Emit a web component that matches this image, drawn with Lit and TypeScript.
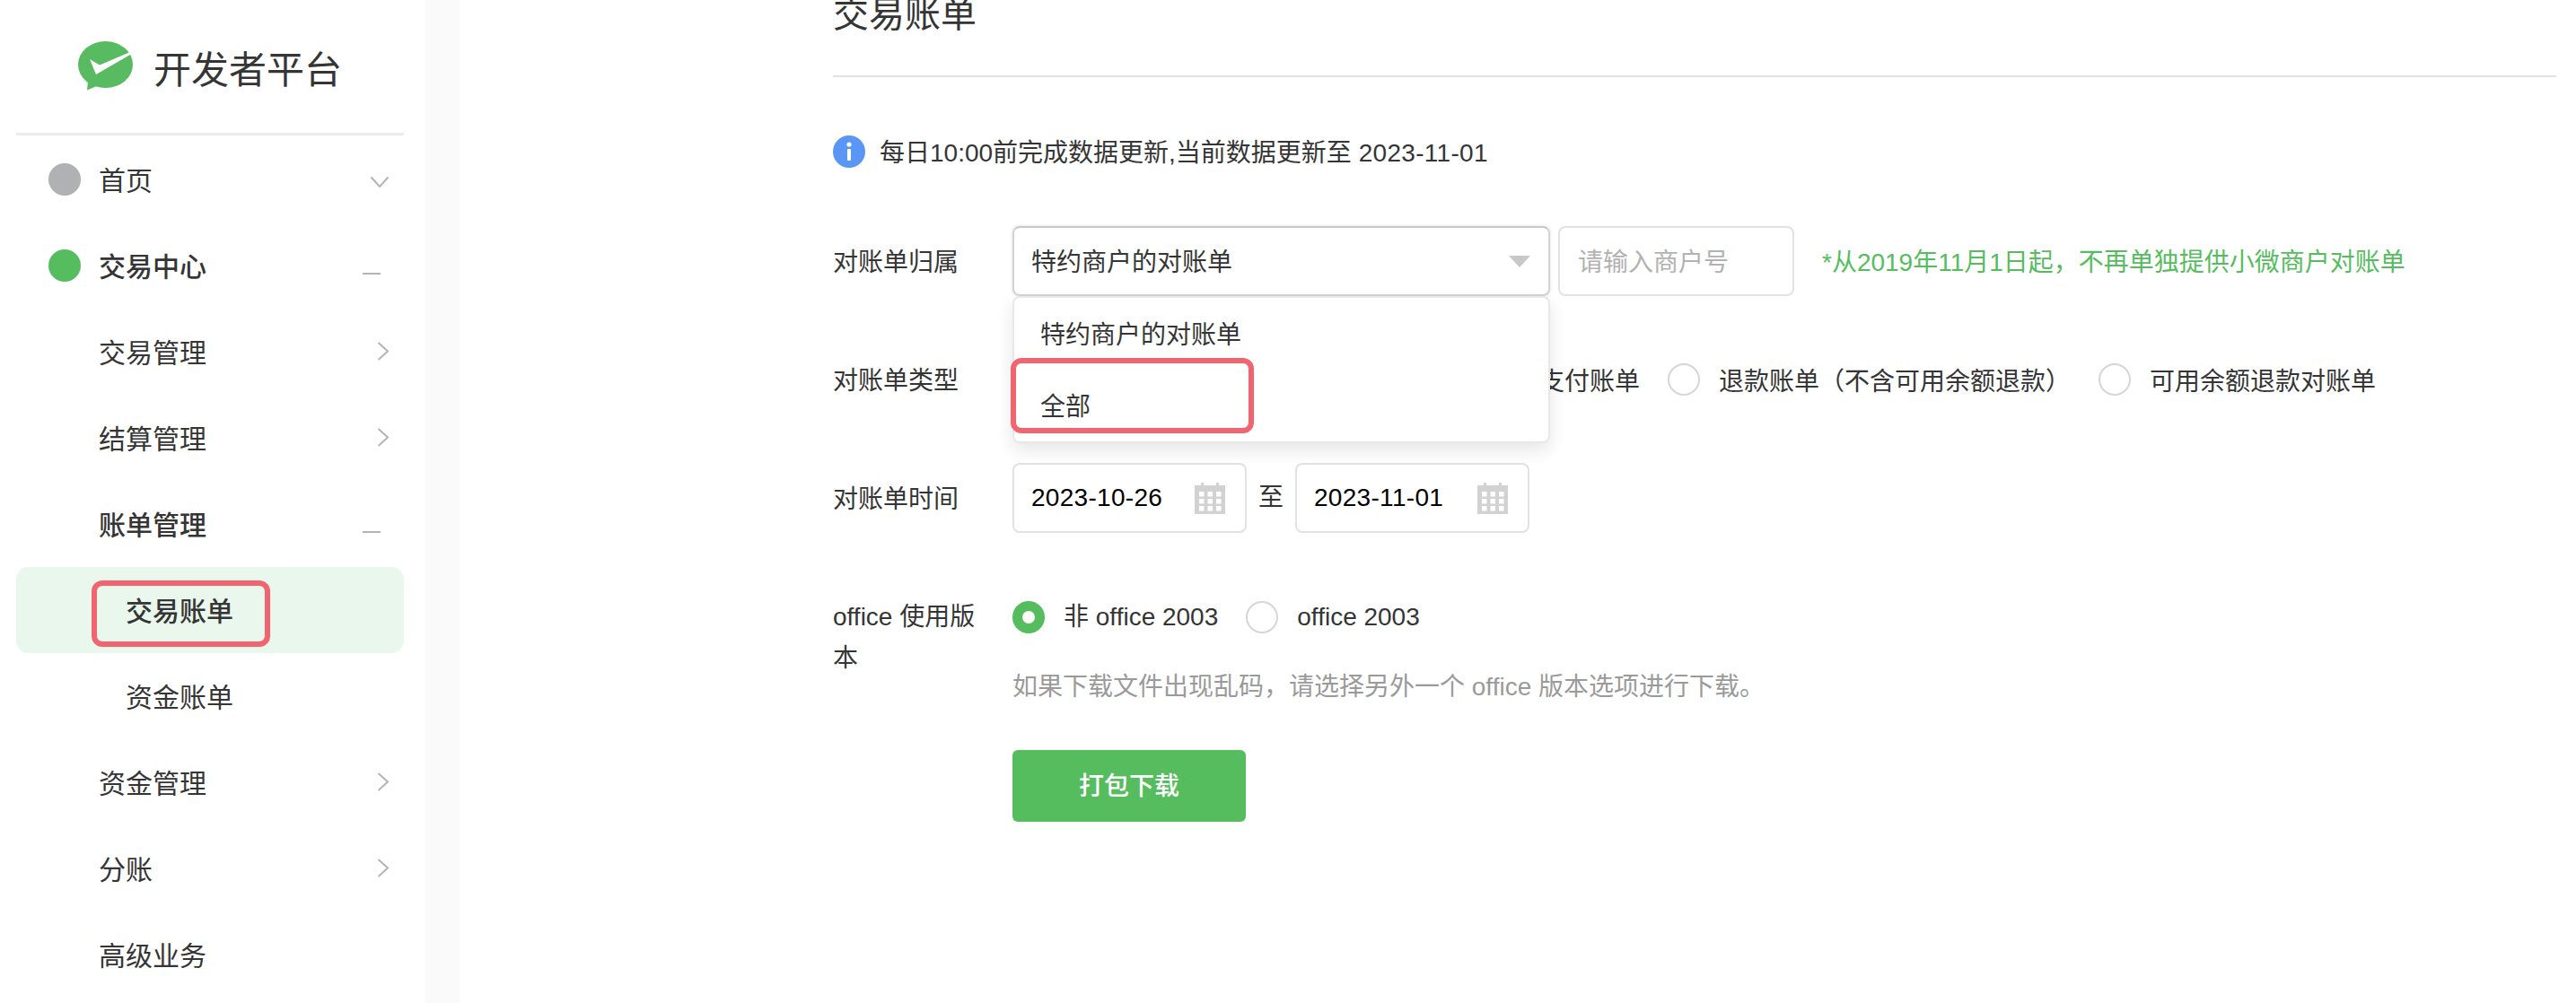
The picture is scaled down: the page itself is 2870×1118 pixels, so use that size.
import { LitElement, html, css, svg } from 'lit';
import { customElement } from 'lit/decorators.js';

type NavItem = {
  label: string
  level: 0 | 1 | 2
  dot?: string
  icon?: 'down' | 'right' | 'dash'
  bold?: boolean
  active?: boolean
}

const NAV: NavItem[] = [
  { label: '首页', level: 0, dot: 'grey', icon: 'down' },
  { label: '交易中心', level: 0, dot: 'green', icon: 'dash', bold: true },
  { label: '交易管理', level: 1, icon: 'right' },
  { label: '结算管理', level: 1, icon: 'right' },
  { label: '账单管理', level: 1, icon: 'dash', bold: true },
  { label: '交易账单', level: 2, bold: true, active: true },
  { label: '资金账单', level: 2 },
  { label: '资金管理', level: 1, icon: 'right' },
  { label: '分账', level: 1, icon: 'right' },
  { label: '高级业务', level: 1 },
];

const ICONS = {
  down: svg`<path d="M12.5 13.5L22 24l9.5-10.5" />`,
  right: svg`<path d="M20.5 6L31 15.5 20.5 25" />`,
  dash: svg`<path d="M3 25h20" />`,
};

const calendar = html`<svg class="cal" width="34" height="36" viewBox="0 0 34 36">
  <path fill="#d2d2d2" d="M0 4h7V1h3v3h14V1h3v3h7v32H0z" />
  ${[11, 19, 27].map(y => [5, 14.5, 24].map(x => svg`<rect x=${x} y=${y} width="5.5" height="5.5" fill="#fff" />`))}
</svg>`;

@customElement('app-root')
export class AppRoot extends LitElement {
  static styles = css`
    :host {
      display: flex;
      width: 2870px;
      height: 1118px;
      overflow: hidden;
      background: #fff;
      color: #353535;
      font-family: "Liberation Sans", "Noto Sans CJK SC", sans-serif;
      font-size: 28px;
    }
    .sidebar {
      width: 474px;
      flex: none;
    }
    .gutter {
      width: 38px;
      flex: none;
      background: #fafafa;
    }
    .logo {
      height: 148px;
      display: flex;
      align-items: center;
      padding-left: 87px;
      gap: 23px;
      font-size: 42px;
      box-sizing: border-box;
    }
    .logo svg {
      margin-top: -2px;
    }
    .divider {
      height: 3px;
      width: 432px;
      margin: 0 0 1px 18px;
      background: #ececec;
    }
    .nav-row {
      height: 96px;
      display: flex;
      align-items: center;
      font-size: 30px;
      padding-right: 41px;
      position: relative;
      box-sizing: border-box;
    }
    .nav-row span {
      padding-bottom: 3px;
    }
    .nav-row.l0 {
      padding-left: 54px;
    }
    .nav-row.l1 {
      padding-left: 110px;
    }
    .nav-row.l2 {
      padding-left: 140px;
    }
    .nav-row.bold span {
      font-weight: 500;
    }
    .nav-row.active {
      margin: 0 24px 0 18px;
      padding-left: 122px;
      background: #e9f7ec;
      border-radius: 14px;
    }
    .dot {
      width: 36px;
      height: 36px;
      border-radius: 50%;
      margin-right: 20px;
      flex: none;
    }
    .dot.grey {
      background: #b0b1b3;
    }
    .dot.green {
      background: #56bd5f;
    }
    .chev {
      margin-left: auto;
      fill: none;
      stroke: #b4b4b4;
      stroke-width: 2;
    }
    .mark {
      position: absolute;
      box-sizing: border-box;
      border: 6px solid #f0656f;
      border-radius: 12px;
    }
    .nav-row .mark {
      left: 84px;
      top: 15px;
      width: 199px;
      height: 74px;
    }
    main {
      flex: 1;
      padding: 0 22px 0 416px;
    }
    h1 {
      margin: -12px 0 0;
      font-size: 40px;
      font-weight: 400;
      line-height: 56px;
      padding-bottom: 40px;
      border-bottom: 2px solid #e2e2e2;
    }
    .notice {
      margin-top: 65px;
      height: 36px;
      display: flex;
      align-items: center;
      gap: 16px;
    }
    .notice span,
    .label,
    .select > span,
    .option,
    .merchant,
    .tip {
      padding-bottom: 3px;
    }
    .notice .num {
      padding-bottom: 0;
    }
    .num {
      letter-spacing: 0.3px;
    }
    .form-row {
      display: flex;
      align-items: center;
      margin-top: 54px;
      height: 78px;
    }
    .form-row.first {
      margin-top: 65px;
      position: relative;
      z-index: 2;
    }
    .label {
      width: 200px;
      flex: none;
      box-sizing: border-box;
    }
    .box {
      height: 78px;
      box-sizing: border-box;
      border: 2px solid #e2e2e2;
      border-radius: 8px;
      display: flex;
      align-items: center;
      background: #fff;
    }
    .select {
      width: 599px;
      padding: 0 20px 0 19px;
      position: relative;
      border-color: #d4d4d4;
      border-top-color: #c8c8c8;
      box-shadow: 0 0 4px rgba(0, 0, 0, 0.12);
      justify-content: space-between;
    }
    .arrow {
      width: 0;
      height: 0;
      border-left: 12px solid transparent;
      border-right: 12px solid transparent;
      border-top: 13px solid #c8c8c8;
    }
    .dropdown {
      position: absolute;
      left: -2px;
      top: 76px;
      width: 599px;
      box-sizing: border-box;
      background: #fff;
      border: 2px solid #e8e8e8;
      border-radius: 8px;
      box-shadow: 0 8px 20px rgba(0, 0, 0, 0.1);
    }
    .option {
      height: 80px;
      box-sizing: border-box;
      display: flex;
      align-items: center;
      padding-left: 29px;
    }
    .dropdown .mark {
      left: -4px;
      top: 67px;
      width: 271px;
      height: 84px;
    }
    .merchant {
      width: 263px;
      margin-left: 9px;
      padding-left: 20px;
      color: #b2b2b2;
    }
    .tip {
      margin-left: 31px;
      color: #56bd5f;
    }
    .options {
      display: flex;
      align-items: center;
      gap: 31px;
    }
    .options.shifted {
      padding-left: 530px;
    }
    .radio {
      display: flex;
      align-items: center;
      gap: 21px;
    }
    .radio i {
      width: 36px;
      height: 36px;
      flex: none;
      box-sizing: border-box;
      border: 2px solid #d6d6d6;
      border-radius: 50%;
    }
    .radio i.on {
      border: 11px solid #56bd5f;
    }
    .date {
      width: 261px;
      padding: 0 22px 0 19px;
      color: #000;
      justify-content: space-between;
    }
    .cal {
      flex: none;
    }
    .to {
      width: 54px;
      text-align: center;
      margin-top: -6px;
    }
    .office {
      display: flex;
      margin-top: 71px;
      line-height: 45px;
    }
    .office .label {
      width: 170px;
      margin-right: 30px;
      line-height: 46px;
      padding-bottom: 0;
    }
    .hint {
      margin-top: 36px;
      line-height: 40px;
      color: #9a9a9a;
    }
    .download {
      display: flex;
      align-items: center;
      justify-content: center;
      width: 260px;
      height: 80px;
      margin-top: 50px;
      border-radius: 6px;
      background: #56bd5f;
      color: #fff;
      font-weight: 500;
    }
  `;

  renderNav(item: NavItem) {
    return html`<div class="nav-row l${item.level} ${item.bold ? 'bold' : ''} ${item.active ? 'active' : ''}">
      ${item.dot ? html`<div class="dot ${item.dot}"></div>` : ''}
      <span>${item.label}</span>
      ${item.icon ? html`<svg class="chev" width="32" height="32" viewBox="0 0 32 32">${ICONS[item.icon]}</svg>` : ''}
      ${item.active ? html`<div class="mark"></div>` : ''}
    </div>`;
  }

  radio(label: string, on = false) {
    return html`<div class="radio"><i class=${on ? 'on' : ''}></i><span>${label}</span></div>`;
  }

  render() {
    return html`
      <aside class="sidebar">
        <div class="logo">
          <svg width="61" height="55" viewBox="0 0 61 55">
            <ellipse cx="30.5" cy="26" rx="30.5" ry="26" fill="#58bb62" />
            <path d="M11 44L10 54.5 23 49z" fill="#58bb62" />
            <path d="M13 20l11 6.5 34-14.5v3L20 37z" fill="#fff" />
          </svg>
          <span>开发者平台</span>
        </div>
        <div class="divider"></div>
        ${NAV.map(item => this.renderNav(item))}
      </aside>
      <div class="gutter"></div>
      <main>
        <h1>交易账单</h1>
        <div class="notice">
          <svg width="36" height="36" viewBox="0 0 36 36">
            <circle cx="18" cy="18" r="18" fill="#5a96f3" />
            <circle cx="18" cy="10" r="2.6" fill="#fff" />
            <rect x="16" y="15" width="4" height="13" rx="1" fill="#fff" />
          </svg>
          <span>每日10:00前完成数据更新,当前数据更新至 <span class="num">2023-11-01</span></span>
        </div>
        <div class="form-row first">
          <div class="label">对账单归属</div>
          <div class="box select">
            <span>特约商户的对账单</span>
            <div class="arrow"></div>
            <div class="dropdown">
              <div class="option">特约商户的对账单</div>
              <div class="option">全部</div>
              <div class="mark"></div>
            </div>
          </div>
          <div class="box merchant">请输入商户号</div>
          <div class="tip">*从2019年11月1日起，不再单独提供小微商户对账单</div>
        </div>
        <div class="form-row">
          <div class="label">对账单类型</div>
          <div class="options shifted">
            ${this.radio('支付账单')}
            ${this.radio('退款账单（不含可用余额退款）')}
            ${this.radio('可用余额退款对账单')}
          </div>
        </div>
        <div class="form-row">
          <div class="label">对账单时间</div>
          <div class="box date"><span class="num">2023-10-26</span>${calendar}</div>
          <div class="to">至</div>
          <div class="box date"><span class="num">2023-11-01</span>${calendar}</div>
        </div>
        <div class="office">
          <div class="label">office 使用版本</div>
          <div>
            <div class="options">
              ${this.radio('非 office 2003', true)}
              ${this.radio('office 2003')}
            </div>
            <div class="hint">如果下载文件出现乱码，请选择另外一个 office 版本选项进行下载。</div>
            <div class="download">打包下载</div>
          </div>
        </div>
      </main>
    `;
  }
}
